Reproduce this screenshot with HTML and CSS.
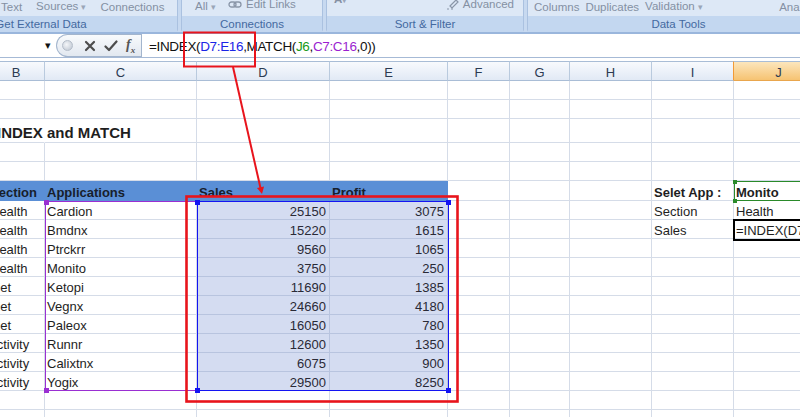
FILE: index.html
```html
<!DOCTYPE html>
<html>
<head>
<meta charset="utf-8">
<title>INDEX and MATCH</title>
<link rel="stylesheet" href="styles.css">
</head>
<body>
<div class="ribbon">
  <div class="grp g1">
    <div class="gtop"><span>Text</span><span>Sources <i class="dd">▾</i></span><span>Connections</span></div>
    <div class="glabel">Get External Data</div>
  </div>
  <div class="grp g2">
    <div class="gtop"><span>All <i class="dd">▾</i></span><span class="raised"><svg class="ico" width="14" height="9" viewBox="0 0 14 9"><rect x="1" y="2" width="7" height="5" rx="2.5" fill="none" stroke="#8a96a8" stroke-width="1.3"/><rect x="6" y="2" width="7" height="5" rx="2.5" fill="none" stroke="#8a96a8" stroke-width="1.3"/></svg>Edit Links</span></div>
    <div class="glabel">Connections</div>
  </div>
  <div class="grp g3">
    <div class="gtop"><span class="raised2">A<i class="dd">▾</i></span><span class="raised"><svg class="ico" width="14" height="11" viewBox="0 0 14 11"><path d="M2 10 L4 10 M6 10 L8 10" stroke="#8a96a8" stroke-width="1"/><path d="M5 7 L11 1 L13 3 L7 9 Z" fill="none" stroke="#8a96a8" stroke-width="1.2"/></svg>Advanced</span></div>
    <div class="glabel">Sort &amp; Filter</div>
  </div>
  <div class="grp g4">
    <div class="gtop"><span>Columns</span><span>Duplicates</span><span>Validation <i class="dd">▾</i></span><span class="an">Analysis</span></div>
    <div class="glabel">Data Tools</div>
  </div>
</div>

<div class="fbar">
  <div class="namebox"><span class="nbarrow">▾</span></div>
  <div class="pill">
    <span class="dot"></span>
    <svg class="btn" width="12" height="12" viewBox="0 0 12 12"><path d="M2 2 L10 10 M10 2 L2 10" stroke="#4d4d4d" stroke-width="2.2" stroke-linecap="round"/></svg>
    <svg class="btn" width="14" height="12" viewBox="0 0 14 12"><path d="M1.5 6.5 L5 10 L12.5 1.5" fill="none" stroke="#4d4d4d" stroke-width="2.2" stroke-linecap="round" stroke-linejoin="round"/></svg>
    <span class="fx">f<sub>x</sub></span>
  </div>
  <div class="formula">=INDEX(<span class="rb">D7:E16</span>,MATCH(<span class="rg">J6</span>,<span class="rp">C7:C16</span>,0))</div>
</div>
<div class="spacer"></div>

<div class="sheet">
  <div class="row hdr">
    <div class="c cb">B</div><div class="c cc">C</div><div class="c cd">D</div><div class="c ce">E</div><div class="c cf">F</div><div class="c cg">G</div><div class="c ch">H</div><div class="c ci">I</div><div class="c cj">J</div>
  </div>
  <div class="row h19"><div class="c cb"></div><div class="c cc"></div><div class="c cd"></div><div class="c ce"></div><div class="c cf"></div><div class="c cg"></div><div class="c ch"></div><div class="c ci"></div><div class="c cj"></div></div>
  <div class="row h19"><div class="c cb"></div><div class="c cc"></div><div class="c cd"></div><div class="c ce"></div><div class="c cf"></div><div class="c cg"></div><div class="c ch"></div><div class="c ci"></div><div class="c cj"></div></div>
  <div class="row h24"><div class="c cb title">INDEX and MATCH</div><div class="c cc"></div><div class="c cd"></div><div class="c ce"></div><div class="c cf"></div><div class="c cg"></div><div class="c ch"></div><div class="c ci"></div><div class="c cj"></div></div>
  <div class="row h19"><div class="c cb"></div><div class="c cc"></div><div class="c cd"></div><div class="c ce"></div><div class="c cf"></div><div class="c cg"></div><div class="c ch"></div><div class="c ci"></div><div class="c cj"></div></div>
  <div class="row h19"><div class="c cb"></div><div class="c cc"></div><div class="c cd"></div><div class="c ce"></div><div class="c cf"></div><div class="c cg"></div><div class="c ch"></div><div class="c ci"></div><div class="c cj"></div></div>
  <div class="row h20"><div class="c cb th">Section</div><div class="c cc th">Applications</div><div class="c cd th">Sales</div><div class="c ce th">Profit</div><div class="c cf"></div><div class="c cg"></div><div class="c ch"></div><div class="c ci bold">Selet App :</div><div class="c cj bold">Monito</div></div>
  <div class="row h19"><div class="c cb">Health</div><div class="c cc">Cardion</div><div class="c cd sel num">25150</div><div class="c ce sel num">3075</div><div class="c cf"></div><div class="c cg"></div><div class="c ch"></div><div class="c ci">Section</div><div class="c cj">Health</div></div>
  <div class="row h19"><div class="c cb">Health</div><div class="c cc">Bmdnx</div><div class="c cd sel num">15220</div><div class="c ce sel num">1615</div><div class="c cf"></div><div class="c cg"></div><div class="c ch"></div><div class="c ci">Sales</div><div class="c cj">=INDEX(D7:E16,MATCH(J6,C7:C16,0))</div></div>
  <div class="row h19"><div class="c cb">Health</div><div class="c cc">Ptrckrr</div><div class="c cd sel num">9560</div><div class="c ce sel num">1065</div><div class="c cf"></div><div class="c cg"></div><div class="c ch"></div><div class="c ci"></div><div class="c cj"></div></div>
  <div class="row h19"><div class="c cb">Health</div><div class="c cc">Monito</div><div class="c cd sel num">3750</div><div class="c ce sel num">250</div><div class="c cf"></div><div class="c cg"></div><div class="c ch"></div><div class="c ci"></div><div class="c cj"></div></div>
  <div class="row h19"><div class="c cb sh">Diet</div><div class="c cc">Ketopi</div><div class="c cd sel num">11690</div><div class="c ce sel num">1385</div><div class="c cf"></div><div class="c cg"></div><div class="c ch"></div><div class="c ci"></div><div class="c cj"></div></div>
  <div class="row h19"><div class="c cb sh">Diet</div><div class="c cc">Vegnx</div><div class="c cd sel num">24660</div><div class="c ce sel num">4180</div><div class="c cf"></div><div class="c cg"></div><div class="c ch"></div><div class="c ci"></div><div class="c cj"></div></div>
  <div class="row h19"><div class="c cb sh">Diet</div><div class="c cc">Paleox</div><div class="c cd sel num">16050</div><div class="c ce sel num">780</div><div class="c cf"></div><div class="c cg"></div><div class="c ch"></div><div class="c ci"></div><div class="c cj"></div></div>
  <div class="row h19"><div class="c cb sh">Activity</div><div class="c cc">Runnr</div><div class="c cd sel num">12600</div><div class="c ce sel num">1350</div><div class="c cf"></div><div class="c cg"></div><div class="c ch"></div><div class="c ci"></div><div class="c cj"></div></div>
  <div class="row h19"><div class="c cb sh">Activity</div><div class="c cc">Calixtnx</div><div class="c cd sel num">6075</div><div class="c ce sel num">900</div><div class="c cf"></div><div class="c cg"></div><div class="c ch"></div><div class="c ci"></div><div class="c cj"></div></div>
  <div class="row h19"><div class="c cb sh">Activity</div><div class="c cc">Yogix</div><div class="c cd sel num">29500</div><div class="c ce sel num">8250</div><div class="c cf"></div><div class="c cg"></div><div class="c ch"></div><div class="c ci"></div><div class="c cj"></div></div>
  <div class="row h19"><div class="c cb"></div><div class="c cc"></div><div class="c cd"></div><div class="c ce"></div><div class="c cf"></div><div class="c cg"></div><div class="c ch"></div><div class="c ci"></div><div class="c cj"></div></div>
  <div class="row h19"><div class="c cb"></div><div class="c cc"></div><div class="c cd"></div><div class="c ce"></div><div class="c cf"></div><div class="c cg"></div><div class="c ch"></div><div class="c ci"></div><div class="c cj"></div></div>

  <div class="rng rng-p"></div>
  <div class="rng rng-b"></div>
  <div class="rng rng-g"></div>
  <div class="rng active"></div>
  <div class="hd hp hp1"></div>
  <div class="hd hp hp2"></div>
  <div class="hd hb hb1"></div>
  <div class="hd hb hb2"></div>
  <div class="hd hb hb3"></div>
  <div class="hd hb hb4"></div>
  <div class="hd hg hg1"></div>
  <div class="hd hg hg2"></div>
</div>

<svg class="annot" width="800" height="417" viewBox="0 0 800 417">
  <rect x="184" y="32.5" width="71" height="34" fill="none" stroke="#e8141c" stroke-width="2"/>
  <line x1="233" y1="67" x2="260.5" y2="188" stroke="#e8141c" stroke-width="2"/>
  <polygon points="262,194 264,186.4 257,188" fill="#e8141c"/>
  <rect x="186.5" y="196.5" width="271" height="205" fill="none" stroke="#e8141c" stroke-width="2.6"/>
</svg>
</body>
</html>
```

FILE: styles.css
```css
* {
  box-sizing: border-box;
  margin: 0;
  padding: 0;
}

body {
  width: 800px;
  height: 417px;
  overflow: hidden;
  position: relative;
  background: #ffffff;
  font-family: "Liberation Sans", Arial, sans-serif;
}

/* ---------- Ribbon ---------- */
.ribbon {
  display: flex;
  gap: 3px;
  height: 34px;
  background: #c7d9f0;
  border-bottom: 2px solid #9ab6dc;
  overflow: hidden;
}

.grp {
  flex: none;
  height: 32px;
  display: flex;
  flex-direction: column;
  border-left: 1px solid #aac1e0;
  border-right: 1px solid #aac1e0;
  border-radius: 0 0 3px 3px;
}

.g1 { width: 274px; margin-left: -96px; }
.g2 { width: 142px; }
.g3 { width: 198px; }
.g4 { width: 303px; }

.gtop {
  height: 16px;
  display: flex;
  align-items: flex-end;
  padding-bottom: 2px;
  background: #dde8f6;
  font-size: 11.5px;
  line-height: 14px;
  color: #8490a3;
  white-space: nowrap;
}

.g1 .gtop { padding-left: 96px; gap: 14px; }
.g2 .gtop { padding-left: 13px; gap: 12px; }
.g3 .gtop { padding-left: 7px; padding-right: 9px; justify-content: space-between; }
.g4 .gtop { padding-left: 6px; padding-right: 7px; gap: 6px; }

.gtop .an { margin-left: auto; }

.dd {
  font-style: normal;
  font-size: 9px;
  color: #9aa6b8;
}

.raised {
  display: flex;
  align-items: center;
  gap: 4px;
  margin-bottom: 3px;
}

.raised2 {
  margin-bottom: 7px;
  font-weight: bold;
}

.ico { flex: none; }

.glabel {
  height: 16px;
  background: #c3d7f0;
  color: #4369a0;
  font-size: 11.5px;
  line-height: 16px;
  text-align: center;
  white-space: nowrap;
}

/* ---------- Formula bar ---------- */
.fbar {
  height: 24px;
  display: flex;
  background: #ffffff;
  border-bottom: 1px solid #a6bad6;
}

.namebox {
  width: 56px;
  display: flex;
  align-items: center;
  justify-content: flex-end;
  padding-right: 3px;
}

.nbarrow {
  font-size: 11px;
  color: #111;
  margin-right: 2px;
}

.pill {
  width: 85px;
  height: 23px;
  display: flex;
  align-items: center;
  gap: 8px;
  padding-left: 5px;
  border: 1px solid #a3b5cd;
  border-right: none;
  border-radius: 12px 0 0 12px;
  background: linear-gradient(#f8fafc, #e2e8f0);
}

.dot {
  width: 11px;
  height: 11px;
  border-radius: 50%;
  background: radial-gradient(circle at 40% 40%, #f4f6f9, #b9c2ce);
  border: 1px solid #b4bdc9;
  margin-right: 3px;
}

.btn { flex: none; }

.fx {
  font-family: "Liberation Serif", "Times New Roman", serif;
  font-style: italic;
  font-weight: bold;
  font-size: 14px;
  color: #555;
}

.fx sub {
  font-size: 9px;
}

.formula {
  flex: 1;
  border-left: 1px solid #a3b5cd;
  padding-left: 7px;
  padding-top: 2px;
  font-size: 13.5px;
  letter-spacing: -0.35px;
  line-height: 22px;
  color: #111;
  white-space: nowrap;
}

.rb { color: #1b25e6; }
.rg { color: #199a19; }
.rp { color: #9b1fd0; }

.spacer {
  height: 3px;
  background: #ffffff;
}

/* ---------- Sheet ---------- */
.sheet {
  position: relative;
  height: 356px;
  overflow: hidden;
}

.row {
  display: flex;
  margin-left: -12px;
}

.hdr { height: 20px; }
.h19 { height: 19px; }
.h20 { height: 20px; }
.h24 { height: 24px; }

.c {
  flex: none;
  height: 100%;
  display: flex;
  align-items: flex-end;
  padding: 0 2px;
  border-right: 1px solid #d5dce8;
  border-bottom: 1px solid #d5dce8;
  font-size: 13px;
  line-height: 15px;
  color: #1e1e1e;
  white-space: nowrap;
}

.cb { width: 57px; }
.cc { width: 152px; }
.cd { width: 133px; }
.ce { width: 118px; }
.cf { width: 62px; }
.cg { width: 60px; }
.ch { width: 82px; }
.ci { width: 82px; }
.cj { width: 90px; }

.cb.sh { padding-left: 0; }

.hdr .c {
  justify-content: center;
  background: linear-gradient(#f8fafd, #e1e9f5);
  border-top: 1px solid #a9bdd6;
  border-right-color: #b9cade;
  border-bottom-color: #a9bdd6;
  color: #2c3b52;
}

.hdr .ci { border-right-color: #f29a36; }

.hdr .cj {
  background: linear-gradient(#fce6bd, #f6c372);
  border-bottom-color: #e9a64d;
}

.title {
  font-weight: bold;
  font-size: 15px;
  line-height: 17px;
  padding-left: 9px;
  padding-bottom: 1px;
  border-right-color: transparent;
}

.th {
  background: #5a8fd6;
  border-color: #5a8fd6;
  font-weight: bold;
  color: #17202c;
}

.bold { font-weight: bold; }

.num {
  justify-content: flex-end;
  padding-right: 3px;
  color: #2a2a36;
}

.sel {
  background: #d4dcf1;
  border-color: #b8c4df;
}

/* overlays on the grid */
.rng {
  position: absolute;
}

.rng-p {
  left: 45px;
  top: 140px;
  width: 153px;
  height: 190px;
  border: 1px solid #9a2fd2;
}

.rng-b {
  left: 197px;
  top: 140px;
  width: 252px;
  height: 190px;
  border: 1px solid #1414f2;
}

.rng-g {
  left: 734px;
  top: 120px;
  width: 80px;
  height: 20px;
  border: 1px solid #2a8a2a;
}

.active {
  left: 733px;
  top: 158px;
  width: 80px;
  height: 22px;
  border: 2px solid #000000;
}

.hd {
  position: absolute;
  width: 5px;
  height: 5px;
}

.hp { background: #9a2fd2; }
.hb { background: #1414f2; }
.hg { background: #2a8a2a; width: 4px; height: 4px; }

.hp1 { left: 44px; top: 139px; }
.hp2 { left: 44px; top: 327px; }
.hb1 { left: 195px; top: 139px; }
.hb2 { left: 446px; top: 139px; }
.hb3 { left: 195px; top: 327px; }
.hb4 { left: 446px; top: 327px; }
.hg1 { left: 733px; top: 119px; }
.hg2 { left: 733px; top: 138px; }

/* red annotation layer */
.annot {
  position: absolute;
  left: 0;
  top: 0;
  pointer-events: none;
}
```
